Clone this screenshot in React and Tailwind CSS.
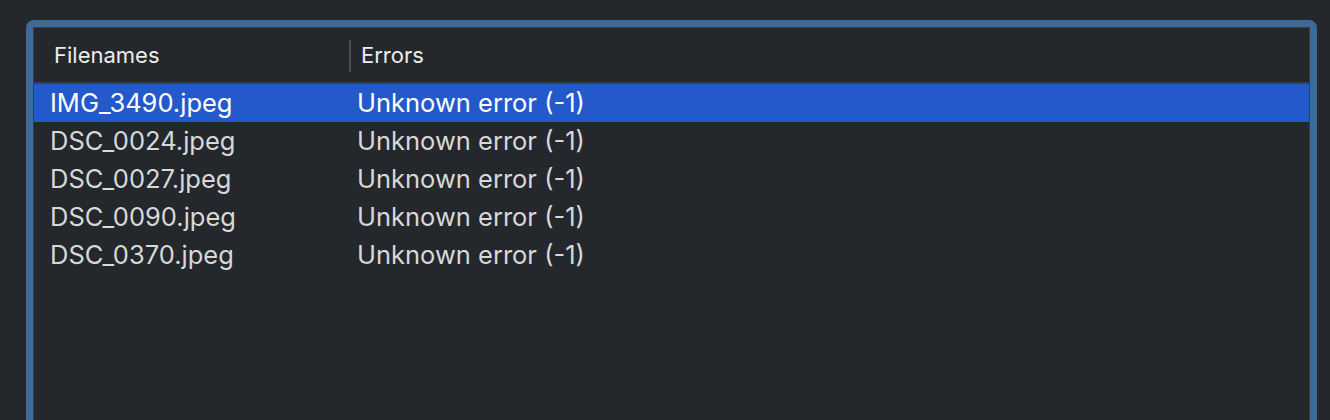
const rows = [
  { name: "IMG_3490.jpeg", error: "Unknown error (-1)" },
  { name: "DSC_0024.jpeg", error: "Unknown error (-1)" },
  { name: "DSC_0027.jpeg", error: "Unknown error (-1)" },
  { name: "DSC_0090.jpeg", error: "Unknown error (-1)" },
  { name: "DSC_0370.jpeg", error: "Unknown error (-1)" },
];

const App = () => {
  return (
    <div
      className="h-[420px] w-[1330px] overflow-hidden bg-[#24272c] pt-[20px] pl-[26px] pr-[13px]"
      style={{ fontFamily: "Inter, 'Liberation Sans', sans-serif" }}
    >
      {/* Focused table */}
      <div className="h-[420px] rounded-t-[8px] border-[7px] border-b-0 border-[#3d6b98]">
        <div className="h-full border border-b-0 border-[#3a3d43] bg-[#24272c]">
          {/* Header */}
          <div className="flex h-[56px] items-center border-b-2 border-[#3b3e43] pt-[1px]">
            <div className="w-[315px] pl-[20px] text-[22px] text-[#ececec]">Filenames</div>
            <div className="h-[32px] w-[2px] bg-[#4a4d52]" />
            <div className="pl-[10px] text-[22px] text-[#ececec]">Errors</div>
          </div>

          {/* Rows */}
          <div>
            {rows.map((row, i) => (
              <div
                key={row.name}
                className={
                  i === 0
                    ? "flex h-[38px] items-center bg-[#2459cc] text-white"
                    : "flex h-[38px] items-center text-[#d8d8d8]"
                }
              >
                <div className="w-[323px] pl-[16px] text-[25.5px]">{row.name}</div>
                <div className="text-[25.5px]">{row.error}</div>
              </div>
            ))}
          </div>
        </div>
      </div>
    </div>
  );
};

export default App;
